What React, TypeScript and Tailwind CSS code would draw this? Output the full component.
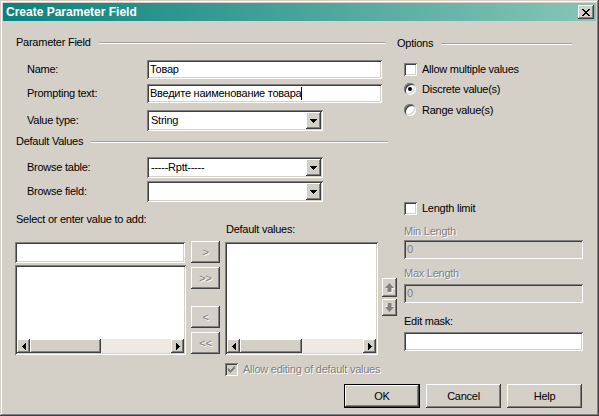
import React from "react";

const sunken =
  "shadow-[inset_1px_1px_#808080,inset_-1px_-1px_#ffffff,inset_2px_2px_#404040,inset_-2px_-2px_#d4d0c8]";
const raised =
  "shadow-[inset_-1px_-1px_#404040,inset_1px_1px_#ffffff,inset_-2px_-2px_#808080,inset_2px_2px_#d4d0c8]";
const disabledText = "text-[#808080] [text-shadow:1px_1px_0_#ffffff]";

function SectionHeader({ label, className = "" }: { label: string; className?: string }) {
  return (
    <div className={"flex items-center h-[13px] " + className}>
      <span className="whitespace-nowrap ml-[1px]">{label}</span>
      <div className="flex-1 ml-[8px] h-[2px] border-t border-b border-t-[#a0a0a0] border-b-white" />
    </div>
  );
}

function DownTri() {
  return (
    <svg width="7" height="4" viewBox="0 0 7 4" shapeRendering="crispEdges">
      <path d="M0 0h7v1h-1v1h-1v1h-1v1h-1v-1h-1v-1h-1v-1h-1z" fill="#000" />
    </svg>
  );
}

function SideTri({ dir }: { dir: "l" | "r" }) {
  return (
    <svg width="4" height="7" viewBox="0 0 4 7" shapeRendering="crispEdges">
      {dir === "l" ? (
        <path d="M4 0v7h-1v-1h-1v-1h-1v-1h-1v-1h1v-1h1v-1h1v-1z" fill="#000" />
      ) : (
        <path d="M0 0v7h1v-1h1v-1h1v-1h1v-1h-1v-1h-1v-1h-1v-1z" fill="#000" />
      )}
    </svg>
  );
}

function TextField({
  children,
  className = "",
  bg = "bg-white",
}: {
  children?: React.ReactNode;
  className?: string;
  bg?: string;
}) {
  return (
    <div className={`${sunken} ${bg} h-[19px] flex items-center pl-[3px] whitespace-nowrap overflow-hidden ${className}`}>
      {children}
    </div>
  );
}

function Combo({ text }: { text: string }) {
  return (
    <div className={`${sunken} bg-white w-[176px] h-[21px] flex items-center p-[2px]`}>
      <div className="flex-1 pl-[2px] whitespace-nowrap">{text}</div>
      <div className={`${raised} bg-[#d4d0c8] w-[15px] h-[17px] flex items-center justify-center`}>
        <DownTri />
      </div>
    </div>
  );
}

function ScrollBar({ thumb }: { thumb: number }) {
  return (
    <div className="flex h-[14px]">
      <div className={`${raised} bg-[#d4d0c8] w-[13px] h-full flex items-center justify-center`}>
        <SideTri dir="l" />
      </div>
      <div className={`${raised} bg-[#d4d0c8] h-full`} style={{ width: thumb }} />
      <div className="flex-1 bg-[#eeeae3]" />
      <div className={`${raised} bg-[#d4d0c8] w-[13px] h-full flex items-center justify-center`}>
        <SideTri dir="r" />
      </div>
    </div>
  );
}

function ListBox({ className, thumb }: { className: string; thumb: number }) {
  return (
    <div className={`${sunken} bg-white flex flex-col p-[2px] ${className}`}>
      <div className="flex-1" />
      <ScrollBar thumb={thumb} />
    </div>
  );
}

function Check({ disabled = false, checked = false }: { disabled?: boolean; checked?: boolean }) {
  return (
    <div
      className={`${sunken} ${disabled ? "bg-[#d4d0c8]" : "bg-white"} w-[13px] h-[13px] flex items-center justify-center shrink-0`}
    >
      {checked && (
        <svg width="7" height="7" viewBox="0 0 7 7" shapeRendering="crispEdges">
          <path
            d="M6 0h1v3h-1v1h-1v1h-1v1h-1v1h-1v-1h-1v-1h-1v-3h1v1h1v1h1v-1h1v-1h1z"
            fill={disabled ? "#808080" : "#000"}
          />
        </svg>
      )}
    </div>
  );
}

function Radio({ checked = false }: { checked?: boolean }) {
  return (
    <div className={`${sunken} bg-white w-[12px] h-[12px] rounded-full flex items-center justify-center shrink-0`}>
      {checked && <div className="w-[4px] h-[4px] rounded-full bg-black" />}
    </div>
  );
}

function MoveBtn({ label, className = "" }: { label: string; className?: string }) {
  return (
    <div
      className={`${raised} bg-[#d4d0c8] w-[29px] h-[22px] flex items-center justify-center ${disabledText} ${className}`}
    >
      {label}
    </div>
  );
}

function Arrow({ up }: { up: boolean }) {
  const d = "M4.5 0L9 5H6.5V9H2.5V5H0Z";
  return (
    <svg width="10" height="10" viewBox="0 0 10 10">
      <g transform={up ? "" : "rotate(180 4.5 4.5)"}>
        <path d={d} fill="#ffffff" transform="translate(1 1)" />
        <path d={d} fill="#808080" />
      </g>
    </svg>
  );
}

function PushButton({ label, def = false, w }: { label: string; def?: boolean; w: string }) {
  if (def) {
    return (
      <div className={`border border-black ${w} h-[24px] flex`}>
        <div className={`${raised} bg-[#d4d0c8] flex-1 flex items-center justify-center`}>{label}</div>
      </div>
    );
  }
  return (
    <div className={`${raised} bg-[#d4d0c8] ${w} h-[24px] flex items-center justify-center`}>{label}</div>
  );
}

export default function App() {
  return (
    <div className="w-[599px] h-[416px] bg-[#d4d0c8] p-[3px] flex flex-col font-['Liberation_Sans',Arial,sans-serif] text-[11px] leading-[13px] tracking-[-0.25px] text-black shadow-[inset_-1px_-1px_#404040,inset_1px_1px_#d4d0c8,inset_-2px_-2px_#808080,inset_2px_2px_#ffffff]">
      {/* title bar */}
      <div className="h-[18px] flex items-center justify-between bg-[linear-gradient(to_right,#0a827e,#86c6b6)]">
        <span className="text-white font-bold pl-[3px] text-[12px] tracking-[0px]">Create Parameter Field</span>
        <div className={`${raised} bg-[#d4d0c8] w-[16px] h-[14px] mr-[2px] flex items-center justify-center`}>
          <svg width="8" height="7" viewBox="0 0 8 7" shapeRendering="crispEdges">
            <path
              d="M0 0h2v1h1v1h2v-1h1v-1h2v1h-1v1h-1v1h-1v1h1v1h1v1h1v1h-2v-1h-1v-1h-2v1h-1v1h-2v-1h1v-1h1v-1h1v-1h-1v-1h-1v-1h-1z"
              fill="#000"
            />
          </svg>
        </div>
      </div>

      {/* body */}
      <div className="flex-1 flex flex-col pl-[12px] pt-[15px]">
        <div className="flex items-start">
          {/* left column */}
          <div className="w-[382px] shrink-0 flex flex-col">
            <SectionHeader label="Parameter Field" className="w-[370px]" />

            <div className="flex items-center h-[19px] mt-[11px]">
              <div className="pl-[12px] w-[132px]">Name:</div>
              <TextField className="w-[235px]">Товар</TextField>
            </div>
            <div className="flex items-center h-[19px] mt-[5px]">
              <div className="pl-[12px] w-[132px]">Prompting text:</div>
              <TextField className="w-[235px]">
                Введите наименование товара
                <span className="inline-block w-px h-[13px] bg-black" />
              </TextField>
            </div>
            <div className="flex items-center h-[21px] mt-[7px]">
              <div className="pl-[12px] w-[132px]">Value type:</div>
              <Combo text="String" />
            </div>

            <SectionHeader label="Default Values" className="w-[373px] mt-[4px]" />

            <div className="flex items-center h-[21px] mt-[9px]">
              <div className="pl-[12px] w-[132px]">Browse table:</div>
              <Combo text="-----Rptt-----" />
            </div>
            <div className="flex items-center h-[21px] mt-[3px]">
              <div className="pl-[12px] w-[132px]">Browse field:</div>
              <Combo text="" />
            </div>

            <div className="flex items-start mt-[11px]">
              {/* col A */}
              <div className="w-[171px] shrink-0 flex flex-col">
                <div className="h-[13px] ml-[1px] whitespace-nowrap">Select or enter value to add:</div>
                <div className={`${sunken} bg-white mt-[16px] h-[21px] w-[170px]`} />
                <ListBox className="mt-[2px] h-[90px] w-[171px]" thumb={71} />
              </div>
              {/* col B */}
              <div className="ml-[5px] w-[29px] shrink-0 flex flex-col">
                <MoveBtn label=">" className="mt-[28px]" />
                <MoveBtn label=">>" className="mt-[4px]" />
                <MoveBtn label="<" className="mt-[17px]" />
                <MoveBtn label="<<" className="mt-[4px]" />
              </div>
              {/* col C */}
              <div className="ml-[5px] w-[153px] shrink-0 flex flex-col">
                <div className="h-[13px] mt-[10px] ml-[1px]">Default values:</div>
                <ListBox className="mt-[6px] h-[113px] w-[153px]" thumb={62} />
                <div className="flex items-center h-[13px] mt-[8px]">
                  <Check disabled checked />
                  <span className={`ml-[5px] whitespace-nowrap ${disabledText}`}>
                    Allow editing of default values
                  </span>
                </div>
              </div>
              {/* col D */}
              <div className="ml-[4px] w-[15px] shrink-0 flex flex-col">
                <div className={`${raised} bg-[#d4d0c8] mt-[65px] h-[19px] flex items-center justify-center`}>
                  <Arrow up />
                </div>
                <div className={`${raised} bg-[#d4d0c8] mt-[2px] h-[17px] flex items-center justify-center`}>
                  <Arrow up={false} />
                </div>
              </div>
            </div>
          </div>

          {/* right column */}
          <div className="-ml-[1px] w-[187px] shrink-0 flex flex-col">
            <SectionHeader label="Options" className="w-[176px] mt-[1px]" />
            <div className="flex items-center h-[13px] mt-[13px] pl-[8px]">
              <Check />
              <span className="ml-[5px] whitespace-nowrap">Allow multiple values</span>
            </div>
            <div className="flex items-center h-[14px] mt-[6px] pl-[8px]">
              <Radio checked />
              <span className="ml-[6px] whitespace-nowrap">Discrete value(s)</span>
            </div>
            <div className="flex items-center h-[14px] mt-[7px] pl-[8px]">
              <Radio />
              <span className="ml-[6px] whitespace-nowrap">Range value(s)</span>
            </div>

            <div className="flex items-center h-[13px] mt-[85px] pl-[8px]">
              <Check />
              <span className="ml-[5px] whitespace-nowrap">Length limit</span>
            </div>

            <div className={`h-[13px] mt-[10px] pl-[8px] ${disabledText}`}>Min Length</div>
            <TextField bg="bg-[#d4d0c8]" className={`mt-[2px] ml-[8px] w-[179px] ${disabledText} [text-shadow:none]`}>
              0
            </TextField>
            <div className={`h-[13px] mt-[8px] pl-[8px] ${disabledText}`}>Max Length</div>
            <TextField bg="bg-[#d4d0c8]" className={`mt-[4px] ml-[8px] w-[179px] ${disabledText} [text-shadow:none]`}>
              0
            </TextField>
            <div className="h-[13px] mt-[12px] pl-[8px]">Edit mask:</div>
            <TextField className="mt-[4px] ml-[8px] w-[179px]" />
          </div>
        </div>

        {/* buttons */}
        <div className="flex justify-end gap-[6px] mt-[8px] pr-[14px]">
          <PushButton label="OK" def w="w-[76px]" />
          <PushButton label="Cancel" w="w-[75px]" />
          <PushButton label="Help" w="w-[75px]" />
        </div>
      </div>
    </div>
  );
}
